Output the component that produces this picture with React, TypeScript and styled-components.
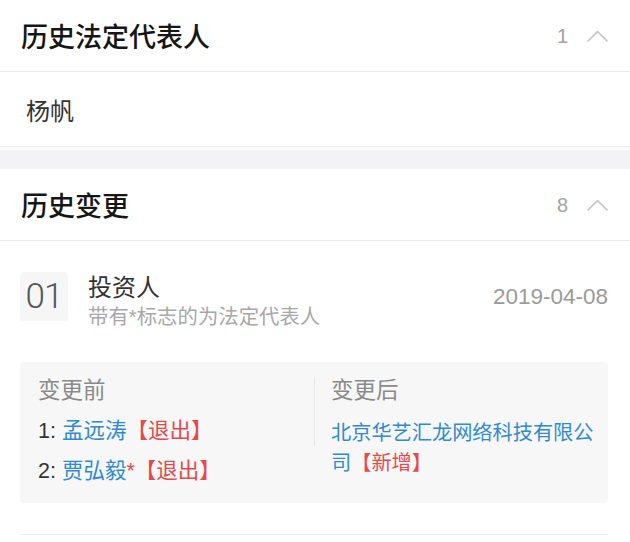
import React from "react";
import styled, { createGlobalStyle } from "styled-components";

const GlobalStyle = createGlobalStyle`
  html, body {
    margin: 0;
    padding: 0;
    background: #ffffff;
  }
  body {
    font-family: "Liberation Sans", "Noto Sans CJK SC", sans-serif;
    color: #333;
    -webkit-font-smoothing: antialiased;
  }
`;

const Page = styled.div`
  width: 630px;
  display: flex;
  flex-direction: column;
`;

const SectionHeader = styled.div`
  box-sizing: border-box;
  height: 72px;
  padding: 0 22px 0 21px;
  display: flex;
  align-items: center;
  justify-content: space-between;
  border-bottom: 1px solid #ececec;
`;

const SectionTitle = styled.h2`
  margin: 0;
  font-size: 27px;
  line-height: 32px;
  font-weight: 500;
  color: #161616;
  font-family: "Noto Sans CJK SC", sans-serif;
`;

const HeaderRight = styled.div`
  display: flex;
  align-items: center;
  gap: 19px;
`;

const Count = styled.span`
  font-size: 20px;
  line-height: 24px;
  color: #a3a3a3;
`;

const NameRow = styled.div`
  box-sizing: border-box;
  height: 75px;
  padding: 0 26px;
  display: flex;
  align-items: center;
  font-size: 24px;
  color: #333;
  border-bottom: 1px solid #f0f0f0;
`;

const Gap = styled.div`
  box-sizing: border-box;
  height: 22px;
  border-top: 3px solid #fafafa;
  background: #f3f3f5;
`;

const Item = styled.div`
  margin: 0 22px 0 20px;
  padding: 31px 0 31px;
  border-bottom: 1px solid #eeeeee;
`;

const ItemHead = styled.div`
  display: flex;
  align-items: flex-start;
`;

const IndexBox = styled.div`
  width: 48px;
  height: 49px;
  border-radius: 4px;
  background: #f6f6f6;
  display: flex;
  align-items: center;
  justify-content: center;
  font-family: Roboto, "Liberation Sans", sans-serif;
  font-weight: 300;
  font-size: 35px;
  color: #555;
  letter-spacing: -1px;
  flex-shrink: 0;
`;

const ItemText = styled.div`
  margin-left: 20px;
  display: flex;
  flex-direction: column;
  flex: 1;
`;

const ItemTitle = styled.div`
  font-size: 24px;
  line-height: 30px;
  color: #333;
  margin-top: 1px;
`;

const ItemSub = styled.div`
  font-size: 20.4px;
  line-height: 28px;
  color: #a8a8a8;
`;

const ItemDate = styled.div`
  font-size: 22.5px;
  line-height: 30px;
  color: #9a9a9a;
  margin-top: 10px;
`;

const ChangeBox = styled.div`
  margin-top: 31px;
  background: #f7f7f7;
  border-radius: 4px;
  padding: 9px 8px 12px 18px;
  display: flex;
  align-items: flex-start;
`;

const Column = styled.div<{ $fixed?: boolean }>`
  display: flex;
  flex-direction: column;
  ${(p) => (p.$fixed ? "width: 276px; flex-shrink: 0;" : "flex: 1; padding-left: 16px;")}
`;

const Divider = styled.div`
  width: 1px;
  height: 69px;
  margin-top: 6px;
  background: #e8e8e8;
  flex-shrink: 0;
`;

const ColLabel = styled.div`
  font-size: 22.5px;
  line-height: 40px;
  color: #8a8a8a;
`;

const Entry = styled.div`
  font-size: 21.5px;
  line-height: 40px;
  color: #333;
  white-space: nowrap;
`;

const Company = styled.div`
  font-size: 20.2px;
  line-height: 30px;
  margin-top: 7px;
  color: #2f8ad2;
`;

const Name = styled.span`
  color: #2f8ad2;
`;

const Tag = styled.span`
  color: #e5484d;
`;

const Chevron = () => (
  <svg width="21" height="12" viewBox="0 0 21 12" fill="none">
    <path d="M1 11 L10.5 1.5 L20 11" stroke="#c2c2c2" strokeWidth="1.6" strokeLinecap="round" strokeLinejoin="round" />
  </svg>
);

const Header = ({ title, count }: { title: string; count: number }) => (
  <SectionHeader>
    <SectionTitle>{title}</SectionTitle>
    <HeaderRight>
      <Count>{count}</Count>
      <Chevron />
    </HeaderRight>
  </SectionHeader>
);

export default function App() {
  return (
    <Page>
      <GlobalStyle />
      <Header title="历史法定代表人" count={1} />
      <NameRow>杨帆</NameRow>
      <Gap />
      <Header title="历史变更" count={8} />
      <Item>
        <ItemHead>
          <IndexBox>01</IndexBox>
          <ItemText>
            <ItemTitle>投资人</ItemTitle>
            <ItemSub>带有*标志的为法定代表人</ItemSub>
          </ItemText>
          <ItemDate>2019-04-08</ItemDate>
        </ItemHead>
        <ChangeBox>
          <Column $fixed>
            <ColLabel>变更前</ColLabel>
            <Entry>
              1: <Name>孟远涛</Name>
              <Tag>【退出】</Tag>
            </Entry>
            <Entry>
              2: <Name>贾弘毅</Name>
              <Tag>*【退出】</Tag>
            </Entry>
          </Column>
          <Divider />
          <Column>
            <ColLabel>变更后</ColLabel>
            <Company>
              北京华艺汇龙网络科技有限公司<Tag>【新增】</Tag>
            </Company>
          </Column>
        </ChangeBox>
      </Item>
    </Page>
  );
}
